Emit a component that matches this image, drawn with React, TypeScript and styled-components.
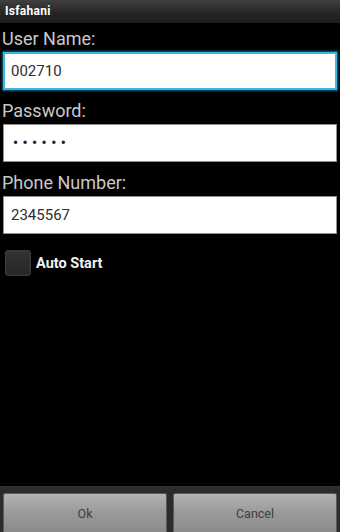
import React from "react";
import styled, { createGlobalStyle } from "styled-components";

const Global = createGlobalStyle`
  html, body { margin: 0; padding: 0; background: #000; height: 100%; overflow: hidden; }
  #root { height: 100%; }
  * { box-sizing: border-box; }
`;

const Screen = styled.div`
  height: 532px;
  display: flex;
  flex-direction: column;
  background: #000;
  font-family: Roboto, "Noto Sans", sans-serif;
  overflow: hidden;
`;

const TitleBar = styled.div`
  height: 23px;
  flex: none;
  display: flex;
  align-items: center;
  padding: 0 5px 1px;
  background: linear-gradient(#404040, #262626 55%, #1c1c1c);
  color: #fff;
  font-weight: 700;
  font-size: 12px;
  letter-spacing: 0.3px;
`;

const Form = styled.div`
  flex: 1;
  display: flex;
  flex-direction: column;
  padding: 5px 3px 0 3px;
`;

const Label = styled.div`
  height: 22px;
  line-height: 22px;
  font-size: 18px;
  color: #c9c9c9;
  margin-left: -1px;
  margin-bottom: 2px;
`;

const Field = styled.div<{ $focused?: boolean }>`
  height: 38px;
  background: #fff;
  display: flex;
  align-items: center;
  padding-left: ${(p) => (p.$focused ? "6px" : "7px")};
  border: ${(p) => (p.$focused ? "2px solid #3ab8e6" : "1px solid #8e8e8e")};
  box-shadow: ${(p) => (p.$focused ? "0 0 2px 1px rgba(51,181,229,0.55)" : "none")};
  font-size: 15px;
  color: #2e2e2e;
  margin-bottom: 10px;
`;

const Dots = styled.span`
  font-size: 14px;
  font-weight: 700;
  letter-spacing: 4.5px;
  color: #222;
  padding-left: 2px;
`;

const CheckRow = styled.label`
  display: flex;
  align-items: center;
  gap: 5px;
  margin-top: 6px;
  padding-left: 2px;
`;

const Box = styled.span`
  width: 26px;
  height: 26px;
  border-radius: 3px;
  background: linear-gradient(#333, #262626);
  border: 1px solid #3c3c3c;
  box-shadow: inset 0 0 1px #555;
`;

const CheckText = styled.span`
  color: #f2f2f2;
  font-size: 14.5px;
  font-weight: 700;
`;

const ButtonBar = styled.div`
  flex: none;
  height: 46px;
  background: #2c2c2c;
  display: flex;
  gap: 6px;
  padding: 6px 3px 0 3px;
  border-top: 1px solid #333;
`;

const Button = styled.button`
  flex: 1;
  height: 48px;
  border: 1px solid #5a5a5a;
  border-radius: 2px;
  background: linear-gradient(#b3b3b3, #9a9a9a 40%, #858585);
  color: #3e3e3e;
  font-family: Roboto, "Noto Sans", sans-serif;
  font-size: 12.5px;
  padding: 0 0 8px 0;
  display: flex;
  align-items: center;
  justify-content: center;
`;

export default function App() {
  return (
    <>
      <Global />
      <Screen>
        <TitleBar>Isfahani</TitleBar>
        <Form>
          <Label>User Name:</Label>
          <Field $focused>002710</Field>
          <Label>Password:</Label>
          <Field>
            <Dots>••••••</Dots>
          </Field>
          <Label>Phone Number:</Label>
          <Field>2345567</Field>
          <CheckRow>
            <Box />
            <CheckText>Auto Start</CheckText>
          </CheckRow>
        </Form>
        <ButtonBar>
          <Button>Ok</Button>
          <Button>Cancel</Button>
        </ButtonBar>
      </Screen>
    </>
  );
}
